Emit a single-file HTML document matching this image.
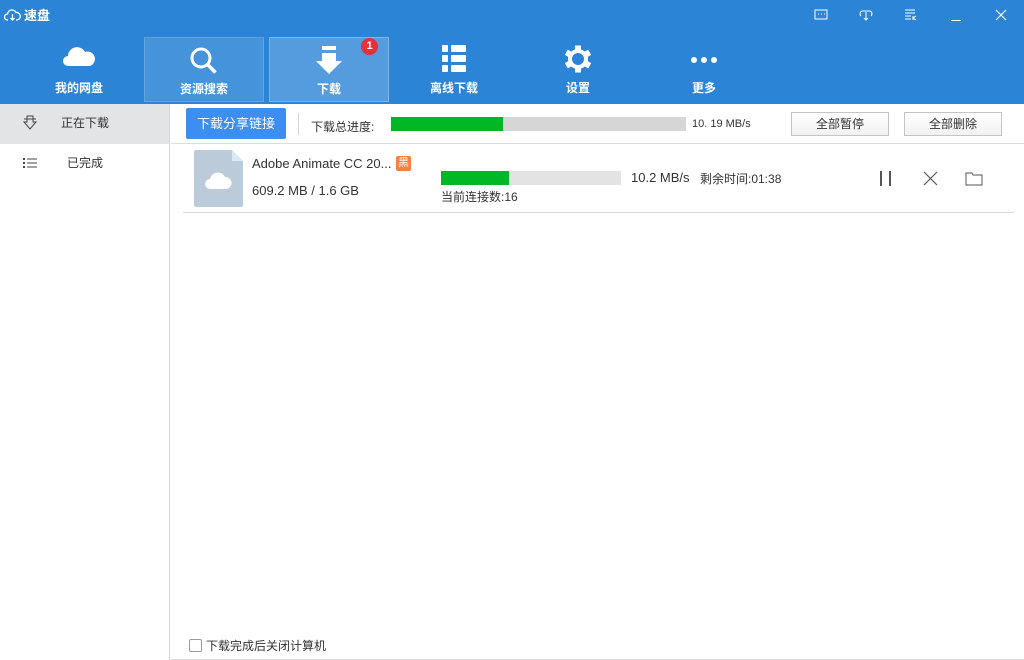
<!DOCTYPE html><html><head><meta charset="utf-8"><style>
*{margin:0;padding:0;box-sizing:border-box}
body{width:1024px;height:660px;position:relative;overflow:hidden;background:#fff;font-family:"Liberation Sans","Noto Sans CJK SC",sans-serif;font-size:12px;color:#333}
.a{position:absolute}
.hdr{left:0;top:0;width:1024px;height:104px;background:#2b84d6;color:#fff}
.tab{position:absolute;top:37px;width:120px;height:65px;text-align:center;font-size:12px;font-weight:bold;color:#fff}
.tab .t{position:absolute;top:42px;left:0;width:100%}
.tab svg{position:absolute;left:50%;transform:translateX(-50%);top:8px}
.btn{position:absolute;border:1px solid #c4c4c4;background:linear-gradient(#fff,#f1f1f1);text-align:center;line-height:22px;font-size:12px;color:#333}
</style></head><body>
<div class="a hdr">
 <svg class="a" style="left:4px;top:8px" width="17" height="14" viewBox="0 0 17 14"><path d="M4 12H3.5A3 3 0 0 1 3.5 6 4.5 4.5 0 0 1 12 4.5 3.5 3.5 0 0 1 13 12H12M8.5 6v6M6.5 10l2 2 2-2" fill="none" stroke="#fff" stroke-width="1.3"/></svg>
 <div class="a" style="left:24px;top:5px;font-size:13px;font-weight:bold">速盘</div>
 <svg class="a" style="left:814px;top:9px" width="14" height="12"><rect x="1" y="1" width="12" height="9" fill="none" stroke="#fff"/><path d="M4 5h1M7 5h1M10 5h1" stroke="#fff"/></svg>
 <svg class="a" style="left:858px;top:9px" width="16" height="12"><path d="M3 7A3 3 0 0 1 4 2h8a3 3 0 0 1 1 5M8 3v8M6 9l2 2 2-2" fill="none" stroke="#fff"/></svg>
 <svg class="a" style="left:905px;top:9px" width="12" height="12"><path d="M0 1h10M0 4h10M0 7h6M0 10h6M8 7v4M8 9l3-2M8 9l3 2" stroke="#fff" fill="none"/></svg>
 <div class="a" style="left:951px;top:20px;width:10px;height:1px;background:#fff"></div>
 <svg class="a" style="left:995px;top:9px" width="12" height="12"><path d="M1 1l10 10M11 1L1 11" stroke="#fff" stroke-width="1.2"/></svg>
 <div class="tab" style="left:19px"><svg width="32" height="22" viewBox="0 0 32 22"><path d="M5 21a5 5 0 0 1 0-10 9 9 0 0 1 17-4 7 7 0 0 1 5 14z" fill="#fff"/></svg><div class="t">我的网盘</div></div>
 <div class="tab" style="left:144px;background:rgba(255,255,255,.12);border:1px solid rgba(255,255,255,.15)"><svg width="30" height="30" viewBox="0 0 30 30"><circle cx="12" cy="12" r="9" fill="none" stroke="#fff" stroke-width="3"/><path d="M18.5 18.5l8 8" stroke="#fff" stroke-width="3.5"/></svg><div class="t">资源搜索</div></div>
 <div class="tab" style="left:269px;background:rgba(255,255,255,.2);border:1px solid rgba(255,255,255,.25)"><svg width="26" height="30" viewBox="0 0 26 30"><rect x="6" y="0" width="14" height="4" fill="#fff"/><path d="M6 7h14v8h6L13 28 0 15h6z" fill="#fff"/></svg><div class="t">下载</div>
  <div class="a" style="left:91px;top:0;width:17px;height:17px;border-radius:50%;background:#e4323a;font-size:11px;line-height:17px;text-align:center">1</div></div>
 <div class="tab" style="left:394px"><svg width="24" height="28" viewBox="0 0 24 28"><g fill="#fff"><rect x="0" y="0" width="6" height="7" rx="1"/><rect x="9" y="0" width="15" height="7" rx="1"/><rect x="0" y="10" width="6" height="7" rx="1"/><rect x="9" y="10" width="15" height="7" rx="1"/><rect x="0" y="20" width="6" height="7" rx="1"/><rect x="9" y="20" width="15" height="7" rx="1"/></g></svg><div class="t">离线下载</div></div>
 <div class="tab" style="left:518px"><svg width="26" height="28" viewBox="-13 -14 26 28"><g fill="#fff"><circle r="10"/><rect x="-3" y="-13.5" width="6" height="27"/><rect x="-3" y="-13.5" width="6" height="27" transform="rotate(60)"/><rect x="-3" y="-13.5" width="6" height="27" transform="rotate(120)"/></g><circle r="6" fill="#2b84d6"/></svg><div class="t">设置</div></div>
 <div class="tab" style="left:644px"><svg width="26" height="28" viewBox="0 0 26 28"><g fill="#fff"><circle cx="3" cy="15" r="3"/><circle cx="13" cy="15" r="3"/><circle cx="23" cy="15" r="3"/></g></svg><div class="t">更多</div></div>
</div>
<div class="a" style="left:0;top:104px;width:170px;height:556px;border-right:1px solid #d8d8d8"></div>
<div class="a" style="left:0;top:104px;width:169px;height:40px;background:#e3e4e6"></div>
<svg class="a" style="left:22px;top:115px" width="16" height="16"><path d="M5 1h6v6h3l-6 7-6-7h3z" fill="none" stroke="#444"/><path d="M2 4h12" stroke="#444"/></svg>
<div class="a" style="left:61px;top:114px;font-size:12px">正在下载</div>
<svg class="a" style="left:23px;top:157px" width="14" height="12"><g fill="#444"><rect x="0" y="1" width="2" height="2"/><rect x="0" y="5" width="2" height="2"/><rect x="0" y="9" width="2" height="2"/><rect x="4" y="1.5" width="10" height="1"/><rect x="4" y="5.5" width="10" height="1"/><rect x="4" y="9.5" width="10" height="1"/></g></svg>
<div class="a" style="left:67px;top:154px">已完成</div>
<div class="a" style="left:171px;top:143px;width:853px;height:1px;background:#dcdcdc"></div>
<div class="a" style="left:186px;top:108px;width:100px;height:31px;background:#3c8ef0;border-radius:2px;color:#fff;font-size:13px;text-align:center;line-height:31px">下载分享链接</div>
<div class="a" style="left:298px;top:113px;width:1px;height:22px;background:#d5d5d5"></div>
<div class="a" style="left:311px;top:118px;font-size:12px">下载总进度:</div>
<div class="a" style="left:391px;top:117px;width:295px;height:14px;background:#d6d6d6"><div style="width:112px;height:14px;background:#00b825"></div></div>
<div class="a" style="left:692px;top:118px;font-size:11px">10. 19 MB/s</div>
<div class="btn" style="left:791px;top:112px;width:98px;height:24px">全部暂停</div>
<div class="btn" style="left:904px;top:112px;width:98px;height:24px">全部删除</div>
<svg class="a" style="left:194px;top:150px" width="50" height="57" viewBox="0 0 50 57"><path d="M2 0h36l11 11v44a2 2 0 0 1-2 2H2a2 2 0 0 1-2-2V2a2 2 0 0 1 2-2z" fill="#bccbd9"/><path d="M38 0v11h11z" fill="#dde8f2"/><path d="M16 39a5 5 0 0 1 0-10 8 8 0 0 1 15-2 6 6 0 0 1 1 12z" fill="#fff"/></svg>
<div class="a" style="left:252px;top:156px;font-size:13px">Adobe Animate CC 20...</div>
<div class="a" style="left:396px;top:156px;width:15px;height:15px;background:#f58040;border-radius:2px;color:#fff;font-size:11px;line-height:15px;text-align:center">黑</div>
<div class="a" style="left:252px;top:183px;font-size:13px">609.2 MB / 1.6 GB</div>
<div class="a" style="left:441px;top:171px;width:180px;height:14px;background:#e3e3e3"><div style="width:68px;height:14px;background:#00b825"></div></div>
<div class="a" style="left:441px;top:188px;font-size:12px">当前连接数:16</div>
<div class="a" style="left:631px;top:170px;font-size:13px">10.2 MB/s</div>
<div class="a" style="left:700px;top:170px;font-size:12px">剩余时间:01:38</div>
<div class="a" style="left:880px;top:171px;width:2px;height:15px;background:#555"></div>
<div class="a" style="left:889px;top:171px;width:2px;height:15px;background:#555"></div>
<svg class="a" style="left:923px;top:171px" width="15" height="15"><path d="M1 1l13 13M14 1L1 14" stroke="#555" stroke-width="1.2"/></svg>
<svg class="a" style="left:965px;top:171px" width="18" height="15"><path d="M1 2h6l1 2h9v10H1z" fill="none" stroke="#555"/></svg>
<div class="a" style="left:183px;top:212px;width:831px;height:1px;background:#dcdcdc"></div>
<div class="a" style="left:171px;top:659px;width:853px;height:1px;background:#dcdcdc"></div>
<div class="a" style="left:189px;top:639px;width:13px;height:13px;border:1px solid #999;border-radius:2px"></div>
<div class="a" style="left:206px;top:637px;font-size:12px">下载完成后关闭计算机</div>
</body></html>
